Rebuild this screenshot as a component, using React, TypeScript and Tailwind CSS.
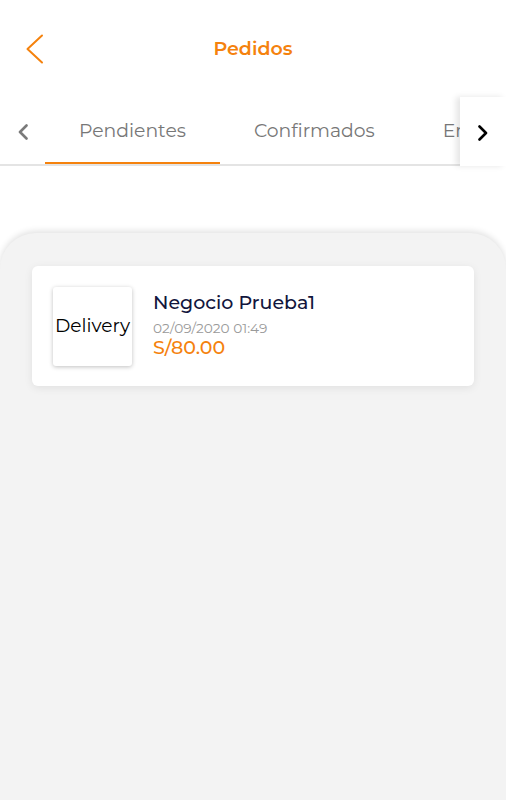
const tabs = ['Pendientes', 'Confirmados', 'Entregados'];

function Chevron({ dir, className }: { dir: 'left' | 'right'; className?: string }) {
    return (
        <svg width="10" height="16" viewBox="0 0 10 16" fill="none" className={className}>
            <polyline
                points={dir === 'left' ? '8.5,1.5 2,8 8.5,14.5' : '1.5,1.5 8,8 1.5,14.5'}
                stroke="currentColor"
                strokeWidth="2.6"
                strokeLinecap="round"
                strokeLinejoin="round"
            />
        </svg>
    );
}

export default function App() {
    return (
        <div className="w-[506px] h-[800px] bg-white flex flex-col overflow-hidden font-['Montserrat','Open_Sans',sans-serif]">
            {/* header */}
            <div className="h-[97px] flex items-center relative">
                <svg
                    width="18"
                    height="30"
                    viewBox="0 0 18 30"
                    fill="none"
                    className="absolute left-[26px] top-[34px] text-[#f5820d]"
                >
                    <polyline points="16,1.5 1.5,15 16,28.5" stroke="currentColor" strokeWidth="2" strokeLinecap="round" strokeLinejoin="round" />
                </svg>
                <div className="flex-1 text-center text-[19px] font-semibold text-[#f5820d] mt-[1px]">
                    Pedidos
                </div>
            </div>

            {/* tabs */}
            <div className="h-[69px] flex items-stretch border-b-2 border-[#e4e4e4] relative">
                <div className="w-[45px] shrink-0 flex items-center justify-center text-[#7a7a7a] pt-[2px]">
                    <Chevron dir="left" />
                </div>
                <div className="flex-1 flex overflow-hidden">
                    {tabs.map((t, i) => (
                        <div
                            key={t}
                            className="shrink-0 px-[34px] pt-[2px] flex items-center justify-center text-[18.8px] text-[#777] relative whitespace-nowrap"
                        >
                            {t}
                            {i === 0 && <div className="absolute left-0 right-0 -bottom-[1px] h-[3px] bg-[#f5820d]" />}
                        </div>
                    ))}
                </div>
                <div className="absolute right-0 top-0 -bottom-[2px] w-[46px] bg-white flex items-center justify-center shadow-[-4px_0_6px_rgba(0,0,0,0.1)] text-black pt-[2px]">
                    <Chevron dir="right" />
                </div>
            </div>

            {/* content */}
            <div className="pt-[67px] flex-1 flex flex-col">
                <div className="flex-1 bg-[#f3f3f3] rounded-t-[36px] shadow-[0_-2px_6px_rgba(0,0,0,0.12)] px-[32px] pt-[33px]">
                    <div className="bg-white rounded-[6px] shadow-[0_2px_8px_rgba(0,0,0,0.08)] h-[120px] flex items-center px-[21px] gap-[21px]">
                        <div className="w-[79px] h-[79px] shrink-0 bg-white rounded-[3px] shadow-[0_1px_4px_rgba(0,0,0,0.25)] flex items-center justify-center text-[18.6px] text-black whitespace-nowrap">
                            Delivery
                        </div>
                        <div className="flex flex-col -mt-[2px]">
                            <div className="text-[19px] font-medium text-[#12163d] leading-[24px]">Negocio Prueba1</div>
                            <div className="text-[13.7px] text-[#9a9a9a] leading-[16px] mt-[5px]">02/09/2020 01:49</div>
                            <div className="text-[19px] font-medium text-[#f5820d] leading-[24px]">S/80.00</div>
                        </div>
                    </div>
                </div>
            </div>
        </div>
    );
}
